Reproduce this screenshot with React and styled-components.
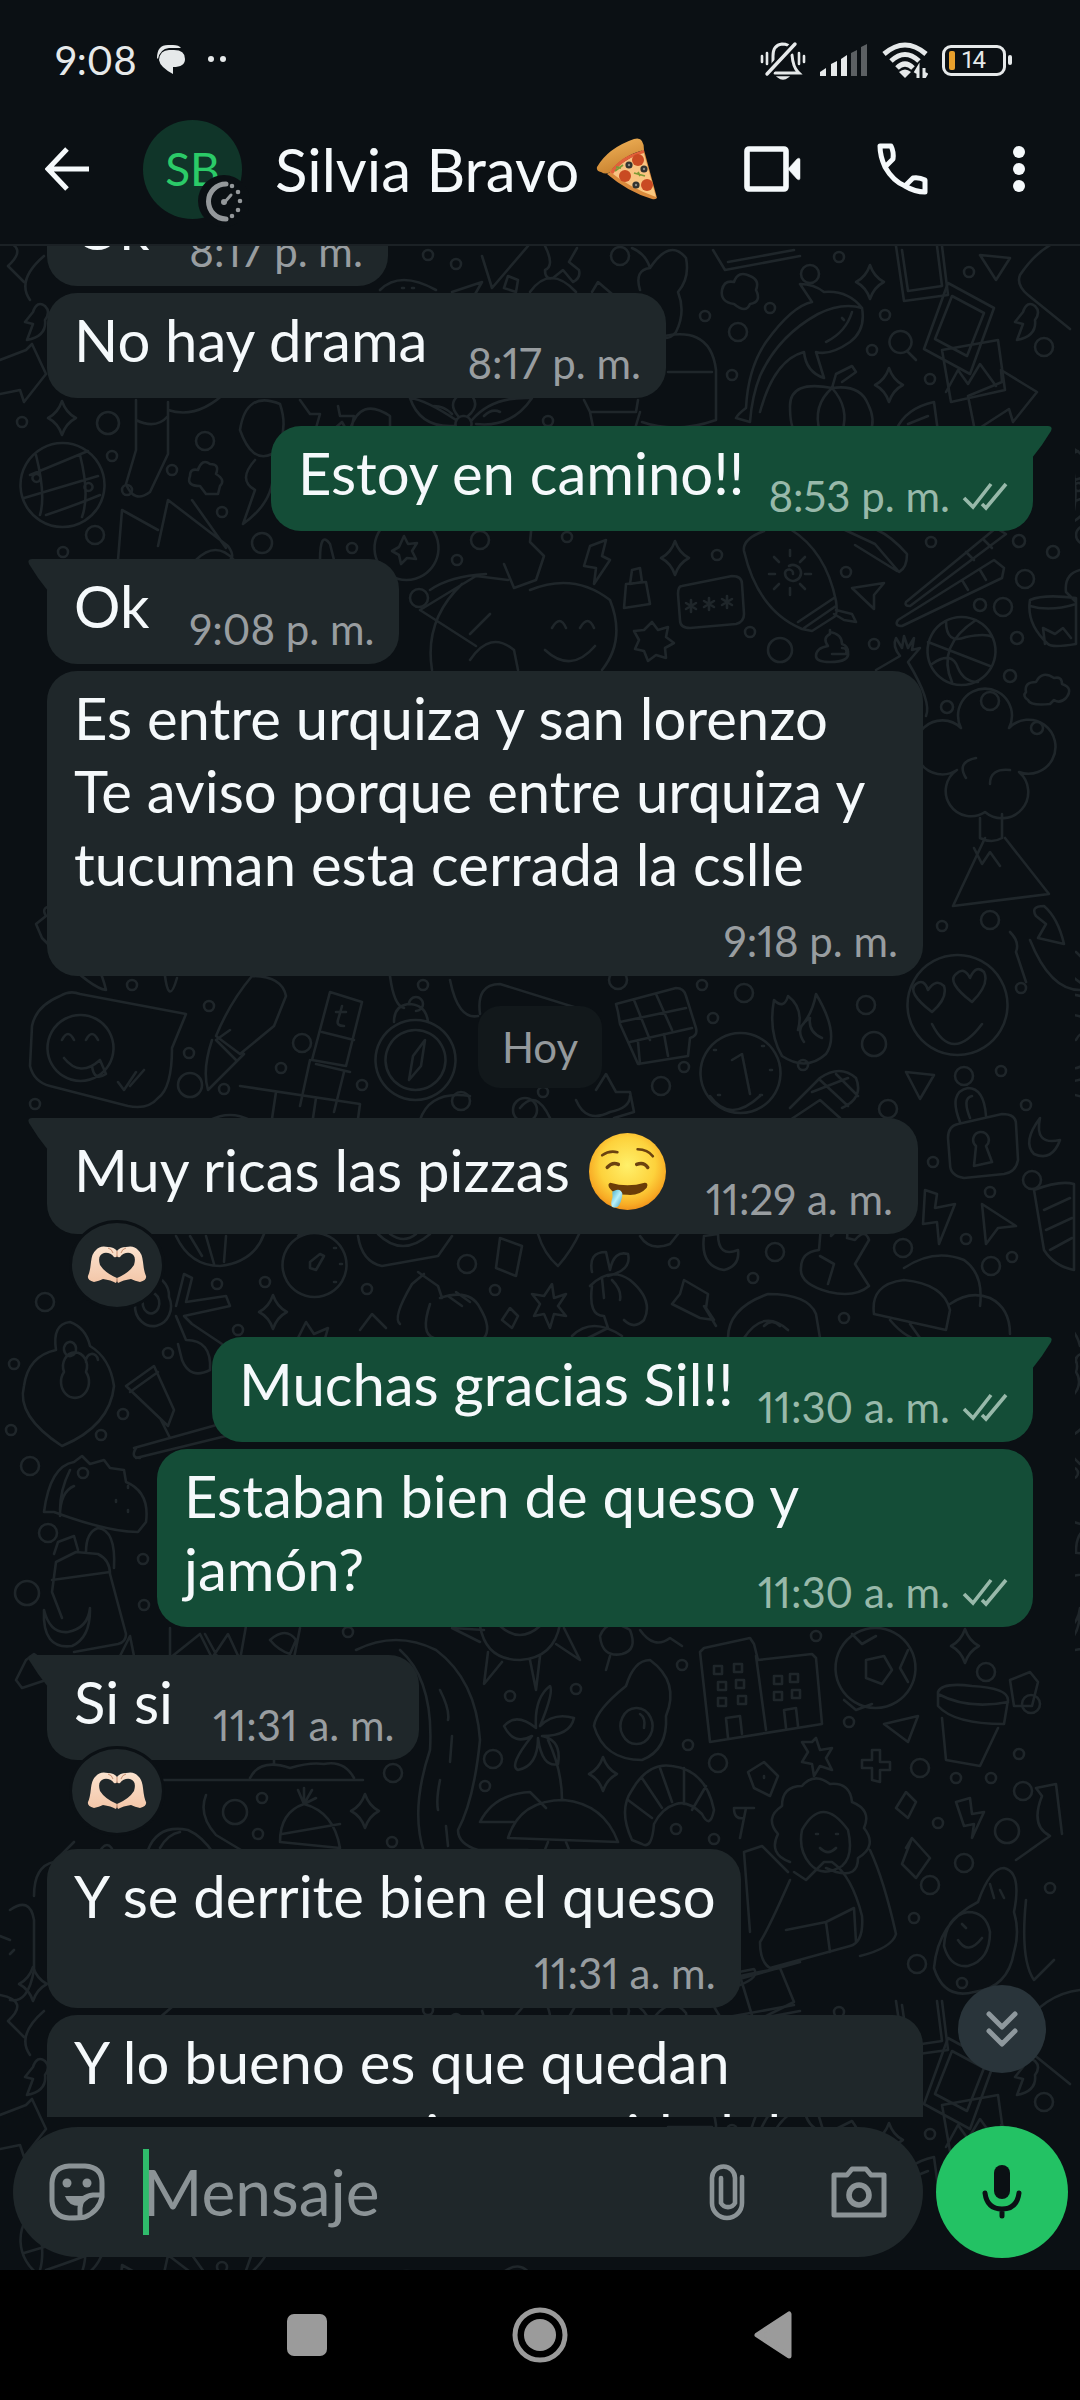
import React, { useLayoutEffect, useRef } from "react";
import styled, { createGlobalStyle, css } from "styled-components";

const messages = [
  { id: 1, text: ["Ok"], time: "8:17 p. m.", gap: 0 },
  { id: 2, text: ["No hay drama"], time: "8:17 p. m.", gap: 7 },
  { id: 3, text: ["Estoy en camino!!"], time: "8:53 p. m.", gap: 28, mine: true, tail: true },
  { id: 4, text: ["Ok"], time: "9:08 p. m.", gap: 28, tail: true },
  {
    id: 5,
    text: ["Es entre urquiza y san lorenzo", "Te aviso porque entre urquiza y tucuman esta cerrada la cslle"],
    time: "9:18 p. m.",
    gap: 7,
    kind: "stacked",
    wide: true,
  },
  { id: 6, day: "Hoy" },
  { id: 7, text: ["Muy ricas las pizzas "], emoji: true, time: "11:29 a. m.", gap: 30, tail: true, reaction: true },
  { id: 8, text: ["Muchas gracias Sil!!"], time: "11:30 a. m.", gap: 30, mine: true, tail: true },
  { id: 9, text: ["Estaban bien de queso y", "jamón?"], time: "11:30 a. m.", gap: 7, mine: true, kind: "overlay", wide: true },
  { id: 10, text: ["Si si"], time: "11:31 a. m.", gap: 28, tail: true, reaction: true },
  { id: 11, text: ["Y se derrite bien el queso"], time: "11:31 a. m.", gap: 16, kind: "stacked" },
  {
    id: 12,
    text: ["Y lo bueno es que quedan", "con esa muy rica suavidad de"],
    time: "11:31 a. m.",
    gap: 7,
    kind: "stacked",
    wide: true,
  },
];

/* wallpaper: [x, y, radius] */
const dots = [
  [456, 264, 5], [428, 255, 5], [839, 257, 5], [810, 274, 9], [620, 256, 9], [969, 272, 5], [770, 308, 5],
  [705, 316, 5], [738, 332, 9], [885, 315, 5], [872, 350, 5], [732, 375, 5], [930, 379, 5], [1044, 347, 9],
  [548, 421, 5], [22, 422, 5], [108, 423, 11], [205, 441, 9], [172, 470, 5], [112, 456, 5], [127, 490, 5],
  [262, 543, 10], [222, 512, 5], [95, 535, 9], [63, 552, 5], [352, 548, 5], [457, 560, 5], [480, 540, 9],
  [567, 537, 5], [717, 555, 5], [846, 572, 5], [931, 542, 5], [1019, 541, 6], [1053, 552, 6], [1025, 579, 9],
  [980, 605, 6], [1003, 607, 9], [750, 632, 5], [780, 650, 12], [874, 644, 5], [1017, 638, 6], [1010, 676, 6],
  [990, 701, 9], [947, 707, 6], [1037, 728, 6], [419, 598, 9], [942, 926, 5], [990, 920, 9], [1021, 988, 5],
  [132, 985, 5], [423, 985, 5], [618, 980, 9], [702, 985, 5], [744, 993, 9], [866, 1005, 9], [209, 1006, 5],
  [302, 1043, 9], [189, 1053, 5], [713, 1018, 5], [874, 1044, 12], [684, 1067, 5], [803, 1065, 5],
  [281, 1068, 5], [190, 1085, 12], [224, 1089, 5], [362, 1085, 5], [661, 1086, 9], [964, 1076, 9],
  [1001, 1071, 5], [543, 1092, 5], [461, 1101, 9], [525, 1110, 12], [35, 1104, 5], [888, 1109, 9],
  [1032, 1180, 9], [933, 1162, 5], [990, 1192, 5], [1026, 1105, 5], [903, 1248, 9], [775, 1252, 9],
  [966, 1239, 5], [991, 1266, 9], [1012, 1257, 5], [674, 1263, 5], [467, 1264, 9], [495, 1290, 5],
  [753, 1278, 5], [367, 1289, 5], [217, 1284, 5], [265, 1282, 5], [45, 1302, 9], [238, 1330, 5],
  [844, 1318, 5], [168, 1353, 5], [14, 1364, 5], [123, 1414, 5], [11, 1430, 5], [101, 1435, 5],
  [30, 1466, 9], [83, 1473, 5], [48, 1533, 9], [143, 1559, 5], [27, 1593, 12], [144, 1605, 5],
  [682, 1665, 5], [576, 1689, 5], [510, 1696, 5], [986, 1672, 9], [1031, 1704, 9], [849, 1722, 5],
  [688, 1745, 5], [718, 1763, 9], [493, 1759, 9], [920, 1768, 9], [956, 1778, 5], [991, 1778, 5],
  [1019, 1754, 5], [1023, 1791, 9], [393, 1773, 9], [485, 1786, 5], [262, 1798, 5], [235, 1812, 12],
  [258, 1834, 5], [676, 1829, 5], [714, 1839, 5], [392, 1842, 5], [938, 1823, 5], [1007, 1831, 12],
  [964, 1863, 9], [930, 1885, 9], [914, 1918, 5], [1050, 1888, 5], [917, 1964, 9], [348, 1632, 5],
  [962, 1983, 5], [816, 1636, 5],
];

/* wallpaper: outlines */
const outlines = [
  // toys and photos on the right
  "M713 250l12 20 75-14M728 262l66-12M896 246l8 55 44-6-6-49M902 250l6 41 34-5-5-40",
  "M948 283l46 25-24 66-46-25zM952 296l32 17-17 43-32-17zM942 350l56-10 7 50-54 12zM946 392l12-22 10 14 12-20 16 22",
  "M980 255l30 3-14 22zM1020 275q24-36 60-40M1020 275q-4 10 8 20l42 34",
  "M968 396l34-14-1-12 36 22-24 30-4-13-34 22z",
  "M862 308q-20-6-44 6-40 22-58 62-8 20-10 46l-14-4q2-4 10-10 2-40 20-66 26-36 46-40l-12-18q14 0 24 8 24-2 38 16 4 22-12 34-20 14-34 10l8 26q-18-6-20-26-30 8-44 60",
  "M852 312q-6 20-26 30M842 318l2 2",
  "M734 304q-14-2-12-14 2-10 12-8 4-12 16-6 10 4 6 14 6 12-6 14-4 10-16 0z",
  "M832 388q-42-8-42 18 0 22 6 26h74q6-12-2-28-8-20-36-16zM832 388q-20 18-12 44M832 388q18 20 10 44M832 388l4-14 16-8 4 6-14 10M896 430q10-22 38-28l4 30M908 424l20-8",
  "M900 331a11 11 0 1 0 1 0zM908 352l8 8",
  "M1035 306q-8-6-12 6l-8 10 8 2-6 16q20-4 18-20 6-8 0-14zM45 306q-8-6-12 6l-8 10 8 2-6 16q20-4 18-20 6-8 0-14z",
  // balls
  "M62 443a42 42 0 1 0 1 0zM36 455q10 40 4 60M30 475l58-24M24 498l74-22M46 515q30-10 54-20M80 455q10 40 2 62M36 474a4 4 0 1 0 1 0zM88 483a4 4 0 1 0 1 0z",
  "M961 617a34 34 0 1 0 1 0zM928 642l62 24M946 621q0 24 20 16 20-4 26 0M932 664q20-14 26 4 6 14 20 14M976 620q-40 26-24 62",
  "M875 1628a40 40 0 1 0 1 0zM866 1660l18-4 8 14-10 14-16-6zM852 1634l10 10 14-8M908 1650l-8 18 8 14M844 1700l12 10 16-6",
  // surfboard, chopsticks, bowl
  "M764 531q-22 8-20 20 14 60 58 78l10 2 22-14q4-2 2-16-10-50-46-72M798 622l36-24M804 628l32-22M836 610l16 4 4 8-12-2-10-6",
  "M789 566a8 8 0 1 1-4 7 4 4 0 1 1 8 1M790 556v-6M800 562l5-5M805 574h6M800 584l5 5M790 588v7M779 584l-5 5M775 574h-6M779 562l-5-5",
  "M845 530l30 14 24 28q8-4 8-18-16-18-30-24M855 545l42 26",
  "M906 602l90-74 10 6-96 72q-6 0-4-4zM898 620l96-60 10 8-2 10-100 48q-8 0-4-6zM962 580l6 10M980 570l6 10M966 552l8 8M984 540l8 8",
  "M1030 600q14-6 46-2v46q-24 4-28 0-22-20-18-44zM1030 606q20 6 46-2M1045 644l-2-16 12 6 8-6 8 10M1080 570q-16 4-14 22l10 10",
  "M852 588l32-5-10 12v14zM830 634q-8 4-2 12-12 2-12 10 0 6 14 6 20 0 18-10 0-6-6-8 0-10-12-12v-2zM832 654h14q2-6-4-6",
  "M876 670l24-14q-8-10-4-18l6 10 2-12 4 12 6-10-2 12 8-2-12 14q24 40 18 54",
  "M1026 692q-2-10 10-10 6-12 18-4 8-2 8 6 12 4 4 14-6 6-12 2l-4 4q-20 2-22-4-6-4-2-8z",
  // password box, badge, star
  "M682 586l50-10q10 0 10 8l2 30q0 8-8 10l-46 4q-10 0-10-8l-2-26q0-8 4-8zM691 600v12M686 603l10 6M696 603l-10 6M709 598v12M704 601l10 6M714 601l-10 6M727 596v12M722 599l10 6M732 599l-10 6",
  "M652 622l6 8 10-3-2 10 8 6-9 5 1 10-10-3-8 6-4-10-9-2 4-9-5-9 10-1z",
  "M406 516a32 32 0 1 0 1 0zM404 536l4 8 9-1-5 8 4 8-9-1-6 6-2-9-7-4 7-4z",
  "M590 546l16-6-4 16 8 4-16 24 2-16-12-2zM626 584l20-2 4 22-26 4zM630 584l2-14 8-2 2 14z",
  // reading person
  "M420 610l56-34 32 4M420 610l56 36M430 590q20-14 56-16M432 670q-8-50 30-86M500 520q20-18 32 2l-2 20 14 14-8 24-22 8-10-24M470 660q20-30 44-10l4 20M530 590q44-18 80 10 16 40-8 70M545 650q26 24 50-4M552 628q8-14 14 0M580 628q8-14 14 0M470 634l20-20",
  // flower and leaves
  "M463 416a8 8 0 1 0 1 0zM456 420q-30-20-46-22 10 30 44 28M472 420q20-24 60-22-20 30-56 26M458 416q-10-12 0-20M468 416q12-10 4-20M500 412q-8-4-16 4M452 414q-8-8-18-8",
  "M136 400v50l-10 34q8 20 24 8l18-38v-52M136 420q20 10 32-4M168 410q30 10 60-20M240 430q6-40 40-26 10 30-8 50-20 10-32-24M255 460q-18 20 0 30l-12 34q34-24 30-60M300 400l10 14h10l-4 14 10 8 16-14 8 14 4-20h-14l-2-10M350 430q10-34 40-14v14M584 400l6 12h46l2-12M590 412l4 20h40l6-20M650 340q60-20 66 30v50q-40 14-74 2M668 372h44",
  "M118 560l4-50 36 20M158 546l10-46 60 46q10 14-4 16M192 500l34 48M196 560q20-20 38 0M320 560q0-30 10-16l4 16",
  "M200 486q-14 0-10-10 0-8 8-6 4-12 12-6 10 0 6 10 10 6 4 12l-2 8h-12z",
  // small things by the header
  "M482 256l10 32 36-42M545 246q10 20 0 24 0 10 8 8l10-8 10 12q8-4 6-12l-10-8 8-14",
  "M380 290q20-20 56 0M402 288h2M412 288h2M452 292l30-10-8 14M508 276l10 4-2 12-12-4zM530 292q20-28 46 0M592 292l6-10 14 12M640 290q-6-20 10-22-4-14-18-20M650 268q20-30 36-10 4 20-8 34 8 20-2 40-10 12-20 0",
  "M0 240q30 6 8 26l16 16M30 300q-14-20 14-44",
  "M0 360l26-10 6-6 14 30-22 28-4-12-20 4",
  // cloud tree, chili and mountain
  "M957 770a27 27 0 1 1 4-42 27 27 0 1 1 48 0 27 27 0 1 1 10 44 24 24 0 0 1-34 40 24 24 0 1 1-28-42M966 778q-10-16 10-20M990 784q0-16 20-14M980 818v20q12 6 22 0v-24M985 838l-32 68 96-12-44-56M974 848l8 16 8-12 10 14",
  "M1044 906q-14 0-8 10l10 8-8 14 26 6q-6-26-20-38zM1030 940q20 50 50 50M1010 932q10 10 6 20l10 30",
  "M54 906q-14 0-8 10l-10 8 6 14 20 20q30 30 44 32-6-26-20-38",
  // speech bubble with face
  "M60 996q10-6 20-2l106 20-14 34q0 40-14 50-10 12-30 8l-78-20q-16-4-20-20l2-40q4-20 28-30zM80 1015a33 33 0 1 0 1 0zM62 1040q6-12 12 0M86 1040q6-12 12 0M64 1058q16 20 36 2l6 14q-12 8-14-8M118 1082l6 8 12-18M130 1086l14-16",
  "M957 955a50 50 0 1 0 1 0zM932 1012q-26-20-16-28 8-6 12 6 8-12 16-4 4 12-12 26zM972 1002q-26-20-16-28 8-8 14 4 6-14 14-6 6 12-12 30zM932 1024q20 40 50 0",
  // pen, ruler, compass
  "M252 976q30 0 34 20l-12 30-34 28-24-18q14-34 36-60zM230 1030l-14 10 20 20M212 1040q-10 30-4 50l36-36M165 976q4 30 12 2",
  "M330 992l32 10-16 64-34-6zM322 1032l32 8M316 1064l34 8M342 1006l-4 14q-2 6 6 6M336 1012h10M310 1060l-10 46M344 1072l-10 40",
  "M415 1020a40 40 0 1 0 1 0zM415 1030a30 30 0 1 0 1 0zM409 1080l4-24 12-16-4 26zM394 1022q0-16 14-18 18 0 20 18M409 1004a7 7 0 1 1 7 7M390 976q4 30 14 32",
  "M240 1086l120 18-4 30M276 1092l-6 40M316 1098l-6 40M480 1014q-4-30 20-30l90 28M450 980q8 40 28 36",
  // chocolate, flame, medal
  "M616 1004l60-16q8 0 10 8l10 32q2 8-6 10l-2 18-50 8-18-40-2-12zM634 1000l16 40M656 994l16 36M620 1022l66-14M630 1042l62-14M640 1064l-2-22M668 1056l-4-22",
  "M774 1000q10 10 14-4 16 12 10 34 14-14 18-36 24 40 10 60-20 18-44 2-14-24-8-56zM804 1042q-10-14 6-24-2 14 12 20",
  "M740 1033a40 40 0 1 0 1 0zM732 1060l10-6 8 40M762 1046h2M770 1070h2M760 1095h2M714 1050h2M718 1095h2",
  "M790 1108q20-20 30-30 20-14 36 0 8 20-14 30M820 1080l28 26M836 1074l22 22M812 1092l36-14M906 1072l28 3-14 24zM596 1090l10-16 10 18 14 0 4 20-20 6",
  // row under the day chip
  "M420 1120q10-30 50-24M520 1108q16-20 30 10M576 1100q10 24 34 12 20-4 20-16M710 1096q20 28 50 0M790 1120l30-20 20 18M250 1120q-20-10-40 0",
  // padlock and moon
  "M958 1124l44-10q14 0 14 10l2 36q-2 12-14 14l-40 4q-14-2-14-14l-2-26q0-12 10-14zM960 1122q-12-30 8-34 16 0 18 28M970 1118q-8-20 2-22M980 1132a8 8 0 0 1 6 14l6 16-18 4 2-20a8 8 0 0 1 4-14z",
  "M1040 1118q-18 24-6 36 18 8 26-14-26 6-20-22z",
  "M925 1190l12 4-2 14 20-4-16 40-2-22-14 2zM982 1204l34 22-18 2-12 16zM1034 1190q26-10 40-6v86q-20-4-30-20zM1044 1210l26-12M1046 1230l26-12M1050 1250l22-12",
  // second band, left to right
  "M176 1236q14 30 44 30 34-4 44-32M190 1236l12 20M206 1236l8 28M226 1236l-2 26M314 1233a32 32 0 1 0 1 0zM310 1262l10-8 4 2-8 14-6-2zM334 1248h2M340 1264h2M334 1282h2M298 1236l4-4",
  "M358 1236q4 26 24 30l56-10 14-20M378 1234q24 24 52 0M390 1234q14 10 26 0M538 1234q6 20 20 32 14-16 22-34M500 1238l22 8-6 30-20-8zM640 1236q10 16 30 8l8-10M704 1236q-4 30 20 34 16-4 14-20-20 8-20-16z",
  "M855 1240q10-12 14 0l-14 24 14 22q-14 12-40 6-30-8-28-24 0-16 18-18l2-24q12-2 10 10l8-8q10 0 8 10zM820 1256l14 8-6 20",
  "M418 1272l20 14 4 12M424 1274l-12 10q-20 34-12 40M430 1304q-10 30 4 34M440 1298q30-10 40 10 12 20 4 30M448 1296l14 10M456 1292l14 10",
  "M592 1272q-4-20 14-20l4 18q4-20 18-16 4 16-20 22M590 1286q20-20 40-6 24 20 14 40-10 10-20 0M592 1286q-4 30 12 30l4 12-20 10M572 1336q20-20 50 0M602 1278l2 20M612 1280q10 10 8 20",
  "M552 1284l2 14 12-4-8 12 8 10-12-2-4 14-6-14-10 2 6-12-8-10 12 2zM510 1308l8 8-6 12-10-8zM684 1280l24 14-2 14 8 12-14-2-28-14 8-10zM704 1306l12 20",
  "M728 1338q0-30 40-44 40 0 48 20l4 24M744 1338q20-30 44-8M764 1326q8-8 16 0M874 1314q-4-30 30-34 40 4 46 30l-4 20zM874 1314l72 16M904 1268q30-20 60-8 20 14 16 46M950 1304q20-14 40-6 20 10 20 36M890 1320q20 24 40 20M910 1324l10 14",
  "M135 1305a18 20 0 1 1 34-8 18 20 0 1 1-34 8zM143 1306a8 10 0 1 1 16-6 8 10 0 1 1-16 6zM176 1306l8-32 8 4-6 24 40-6 4 10-46 10 8 8 30 20M176 1316l10 24q26 0 24 30-20 10-28-10l-4-16",
  "M298 1338l8-16 8 12 14-6-4 14M360 1330l12-16 14 14",
  // pear, glass, rolling pin, taco
  "M56 1350q-4-26 14-28 16 6 20 24 20 12 24 40-4 40-52 60-46-30-38-60 4-30 32-36zM64 1350a6 7 0 1 1 12-2 6 7 0 1 1-12 2zM86 1362a6 7 0 1 1 12-2M64 1372a12 14 0 1 1 22 0 14 16 0 1 1-22 0z",
  "M126 1386l28-20 20 44-6 16zM130 1392l28-20M134 1448l86-24M136 1458l90-22q12-10 4-14M136 1448q-6 10 4 10M170 1438l-10-20",
  "M44 1512q6-46 30-50l8-6 8 8 14-4 6 8 14 2 2 12q24 10 20 40l-8 10q-30 0-84-20zM60 1516q0-24 14-30M128 1486v2M116 1500v2M128 1510v2M70 1470q-10 20-10 40",
  // bottle and bananas
  "M56 1562l20-10 22 2q12 6 12 20l16 60q0 8-8 10l-44 8M56 1562l-4 30 10 26M54 1554l4-12 16-6 4 14M52 1580l58-8M86 1552q0-20 12-24 18 2 16 40M44 1610q6 24 24 22 20-4 22-24M44 1610q-2 40 28 36 18-8 18-36",
  "M26 1660l8-6 8 6 4 20-12 4-12 4-6-8zM120 1656l10-20 6 30M170 1628v30l30-24 12 24 16-24 12 26 6-34M205 1634l12 22M270 1640q16-14 26 0l-6 14q-12-4-20-14zM300 1628l-6 30",
  // sun, road, egg
  "M480 1626q6 34 40 34 34-2 40-36M500 1626q20 18 40 0M484 1630l-32-2 28 14M488 1652l-4 32 18-22M530 1660l6 30 4-34M556 1644l24 16-16-32",
  "M356 1650q40-20 80 0 40 30 44 90-6 60-22 90 0 14 20 20h50M400 1650q34 30 30 100-20 60-6 102M440 1690q10 20 8 30M452 1736l-2 26M440 1780q-4 20-2 30M446 1826l2 20",
  "M650 1660q-16 0-24 26-30 24-32 40 10 34 48 34 26-10 24-44 14-34-16-56zM636 1708a16 18 0 1 0 1 0zM640 1714q6 4 4 14M600 1636q8-20 30-6 8 20-8 24-20 4-22-18zM610 1656l-4 14M640 1630q14 20 30 8l12 8",
  // buildings
  "M710 1742l-10-90 4-4 46-10 4 6 4 16 54-6 4 4 6 66zM756 1656l10 74M714 1666h8v8h-8zM734 1664h8v8h-8zM718 1682h8v8h-8zM736 1680h8v8h-8zM718 1698h8v8h-8zM738 1696h8v8h-8zM774 1676h8v8h-8zM790 1674h8v8h-8zM774 1692h8v8h-8zM792 1690h8v8h-8zM728 1738l-2-20 14-2 2 18M786 1728l-2-18 12-2 2 18",
  // plant pot, plus, asterisk
  "M938 1692q4-10 34-6 36 2 36 14l-4 24q-50 0-66-18zM938 1694q30 16 70 8M942 1718l4 42 34 6 18-38M884 1724l34-8-10 26zM872 1750h8v12h10v8h-10v12l-8-2v-12h-10v-8h10zM816 1738l4 12 12-2-6 10 6 12-12-4-6 10-2-12-10-2 6-10-6-10h10zM1010 1680l20-8 8 10-6 24h-18z",
  // palm leaf, beach umbrella
  "M536 1728q-20-16-32-2 10 20 28 10-24 30-14 34 20-4 20-32 4 30 20 26 4-24-16-28 28 0 32-18-20-6-34 8 14-34 10-40-16 12-14 42zM548 1740q14 30 14 60M480 1822q14-28 50-30l16 16M480 1822h34M508 1838q12-38 56-38 40 4 54 42zM548 1842l-4 10M566 1842l4 10",
  "M163 1780h200M250 1778q10-20 40-10 20-6 34-4 20-4 30 14M274 1764v-8M206 1795q-8 20 10 40l30 18M280 1842q0-30 24-38 30 8 36 44zM282 1834l58-10M304 1804l-6-14M304 1804v-16M304 1804l8-14M304 1804l12-6M148 1850q10-26 40-20 14 6 26 24M160 1848q8-14 20-16M96 1858q12-26 20 0",
  // croissant
  "M632 1840q-14-30 0-50 16-28 40-24 34 4 42 44-4 20-12 4-14-14-26-10-14 4-22 20-2 26-12 20zM642 1778l20 30M660 1768l12 34M684 1768v36M706 1786l-14 24M628 1800l24 18M734 1808h20M746 1808l-6 30M734 1808q0 12 10 10",
  // person with the laptop
  "M790 1862q-22-8-12-28-14-16 4-28 0-20 20-20 12-14 28-2 20-2 22 18 20 8 12 26 14 18-6 30 0 20-22 14l-10-4M802 1830q20-36 46 0 6 26-6 36-20 12-32-2-12-14-8-34zM816 1834h2M836 1834h2M820 1848q8 8 16 0M790 1880q-22 50-30 62 0 20 10 26l80-22q14-4 12-30-10-40-30-54l-8 0-18 18-12-8M786 1930l40-8 4 30M826 1922l28-14 2 34M744 1852l18-6 26 26M744 1852l6 80M870 1850q14 30 26 84-4 14-36 22M740 1976l40-8 14 34-40 20zM700 1990l100-28",
  // avocado
  "M1004 1868q-14 0-26 34-40 20-44 66 10 32 40 24 34-4 40-40 6-20 0-40 8-40-10-44zM968 1912q-22 4-24 34 6 22 24 20 22-6 22-34-4-20-22-20zM958 1940q10 16 24-2M962 1924l4 4M990 1884l4 14M1000 1890l4 8M1030 1850l20-14q-20-10-8-40l-6-8 20-4 6 50M1016 1860l20-14",
  "M970 1798l-14 4 8 24 10-2-2 14 12-26-12 2zM764 1762l14 14-8 20-16-8-6-16zM764 1776v2M906 1792l10 10-8 16-12-10zM912 1838l18 20-14 20-14-14zM912 1838l-6 10",
  // last row before the tile repeats
  "M10 1910q20-14 24 10v50q-6 34-24 30M0 1936l10 4M14 1950l-4 4M34 1896q0-30 20-34l20-20M1026 1900q-6 60 8 80l20-20",
  "M660 2005l80-20q20-8 14-16l-100 20M560 2000l30-20 40 14M420 1996q20 20 40 0M300 2000l20-16 20 18M180 2000l-30 26",
];

const sparkles = [
  [870, 282], [889, 385], [62, 418], [675, 558], [273, 1312], [603, 1774], [965, 1646], [365, 1811], [33, 1984],
];

const Wallpaper = () => (
  <WallpaperSvg aria-hidden="true">
    <g fill="none" stroke="#1f262a" strokeWidth="2.6" strokeLinejoin="round" strokeLinecap="round">
      <g transform="translate(0 -246)">
        <g id="tile">
          {dots.map(([x, y, r]) => (
            <circle key={`${x}-${y}`} cx={x} cy={y} r={r} />
          ))}
          {sparkles.map(([x, y]) => (
            <path key={`${x}-${y}`} d={`M${x} ${y - 17}q4 12 14 17q-10 5-14 17q-4-12-14-17q10-5 14-17z`} />
          ))}
          {outlines.map((d) => (
            <path key={d} d={d} />
          ))}
        </g>
        <use href="#tile" x="0" y="1755" />
        <use href="#tile" x="990" y="0" clipPath="url(#edge)" />
      </g>
    </g>
    <defs>
      <clipPath id="edge">
        <rect x="85" y="0" width="900" height="2400" />
      </clipPath>
    </defs>
  </WallpaperSvg>
);

const Pizza = () => (
  <svg width="62" height="62" viewBox="0 0 62 62" role="img" aria-label="pizza">
    <defs>
      <linearGradient id="crust" x1="0" y1="0" x2="0.4" y2="1">
        <stop offset="0" stopColor="#f3b65c" />
        <stop offset="1" stopColor="#c9822f" />
      </linearGradient>
      <linearGradient id="cheese" x1="0" y1="0" x2="1" y2="1">
        <stop offset="0" stopColor="#f08a5a" />
        <stop offset="0.3" stopColor="#f9c283" />
        <stop offset="1" stopColor="#fbc97e" />
      </linearGradient>
    </defs>
    <path d="M11 36L48 12 61 60Q59 62 56 61Q32 54 11 36z" fill="#d98a3c" />
    <path d="M13 33L47 12 60 59Q34 50 13 33z" fill="url(#cheese)" />
    <path d="M1 29Q12 10 38 1Q48-2 48 12Q27 17 14 34Q10 37 5 34Q0 33 1 29z" fill="url(#crust)" />
    <path d="M14 34Q24 18 48 12L48 15Q26 21 17 36z" fill="#e2603a" />
    <circle cx="42" cy="22" r="6" fill="#c94a22" />
    <circle cx="29" cy="38" r="6" fill="#c94a22" />
    <circle cx="51" cy="47" r="6" fill="#c94a22" />
    <g fill="#8c8a84" stroke="#33332f" strokeWidth="2.4">
      <circle cx="33" cy="27" r="2.4" />
      <circle cx="48" cy="31" r="2.4" />
      <circle cx="40" cy="47" r="2.4" />
    </g>
    <path d="M19 33l8-6M20 29l5 1M38 35l11 3M42 34l2 4" stroke="#7d9a35" strokeWidth="1.8" fill="none" />
  </svg>
);

const DroolingFace = () => (
  <Emoji viewBox="0 0 76 76" role="img" aria-label="drooling face">
    <defs>
      <radialGradient id="face" cx="0.5" cy="0.42" r="0.6">
        <stop offset="0" stopColor="#fff06a" />
        <stop offset="0.6" stopColor="#fdd23c" />
        <stop offset="0.85" stopColor="#f8ac25" />
        <stop offset="1" stopColor="#ee8c18" />
      </radialGradient>
      <linearGradient id="drool" x1="0" y1="0" x2="1" y2="1">
        <stop offset="0" stopColor="#3fa9c9" />
        <stop offset="0.5" stopColor="#b9f1fa" />
        <stop offset="1" stopColor="#3b9ab8" />
      </linearGradient>
    </defs>
    <circle cx="38" cy="38" r="38" fill="url(#face)" />
    <g fill="none" stroke="#6b4210" strokeWidth="3.4" strokeLinecap="round">
      <path d="M13 22Q20 17 28 19M48 16Q58 16 63 23" strokeWidth="2.6" />
      <path d="M18 34Q23 28 29 31M47 31Q54 28 58 34" />
    </g>
    <path d="M21 49Q38 54 55 49Q59 49 57 54Q50 62 38 61Q24 61 20 54Q18 50 21 49z" fill="#6b3d08" />
    <path d="M25 57Q31 54 33 60Q32 70 28 73Q21 75 22 68Q24 63 23 58z" fill="url(#drool)" />
  </Emoji>
);

const HeartHands = () => (
  <svg width="60" height="38" viewBox="0 0 60 38" role="img" aria-label="heart hands">
    <defs>
      <linearGradient id="skin" x1="0" y1="0" x2="0" y2="1">
        <stop offset="0" stopColor="#fbe3cf" />
        <stop offset="1" stopColor="#f3c6a8" />
      </linearGradient>
    </defs>
    <path
      d="M30 5Q27 1 21 1Q13-1 9 4Q5 7 4 16Q3 26 1 30Q0 34 7 36Q12 35 16 33Q24 34 29 37Q30 36 30 32Q18 27 13 19Q10 9 17 7Q23 6 27 11Q30 12 30 9Z"
      fill="url(#skin)"
    />
    <path
      d="M30 5Q33 1 39 1Q47-1 51 4Q55 7 56 16Q57 26 59 30Q60 34 53 36Q48 35 44 33Q36 34 31 37Q30 36 30 32Q42 27 47 19Q50 9 43 7Q37 6 33 11Q30 12 30 9Z"
      fill="url(#skin)"
    />
    <path d="M30 5v6M30 32v4M21 2q4 1 5 5M39 2q-4 1-5 5" stroke="#c98e70" strokeWidth="1" fill="none" />
  </svg>
);

const Checks = () => (
  <svg width="46" height="29" viewBox="0 0 46 29" fill="none" stroke="currentColor" strokeWidth="3.6" aria-label="entregado">
    <path d="M2 16l9 9L29 2" />
    <path d="M20 22l4 4L44 2" />
  </svg>
);

const StatusIcons = () => (
  <StatusGroup>
    <svg width="46" height="40" viewBox="0 0 46 40" fill="none" stroke="#e6e9ea" strokeWidth="3" strokeLinecap="round">
      <path d="M13 27V16q0-11 9-12 7 0 10 5M13 24l-3 5M32 15q1 12 6 17l1 1H15" />
      <path d="M6 35L35 4" stroke="#0b1014" strokeWidth="8" />
      <path d="M7 34L35 4" strokeWidth="3.4" />
      <path d="M2 16v6M7 13v11M39 13v11M44 16v6" strokeWidth="2.6" />
      <path d="M18 37h10q-5 4-10 0z" fill="#e6e9ea" strokeWidth="1.5" />
    </svg>
    <svg width="48" height="32" viewBox="0 0 48 32" fill="#e6e9ea">
      <path d="M0 32v-4l6-4v8zM11 32V20l6-3v15zM21 32V15l6-4v21z" />
      <path d="M31 32V9l6-3v26zM41 32V3l6-3v32z" fill="#5c6063" />
    </svg>
    <svg width="46" height="36" viewBox="0 0 46 36" fill="none" stroke="#e6e9ea" strokeWidth="5">
      <path d="M2 12Q23-6 44 12M9 19Q23 6 37 19M15 26Q23 18 31 26" />
      <path d="M23 36l-6-6q6-5 12 0z" fill="#e6e9ea" stroke="none" />
      <path d="M36 36V26l-3 5M42 26v10l3-5" strokeWidth="3" />
    </svg>
    <Battery>
      <BatteryLevel />
      14
    </Battery>
  </StatusGroup>
);

const Message = ({ item }) => {
  const { text, time, gap, mine, tail, kind, wide, emoji, reaction } = item;
  return (
    <Row $mine={mine} $gap={gap}>
      <Bubble $mine={mine} $tail={tail} $kind={kind} $wide={wide}>
        {tail && (
          <Tail $mine={mine} viewBox="0 0 40 32" aria-hidden="true">
            <path d="M40 0H4Q-1 0 1 5Q10 20 20 32H40z" fill="currentColor" />
          </Tail>
        )}
        <Text $oneLine={emoji}>
          {text.map((line, i) => (
            <React.Fragment key={line}>
              {i > 0 && <br />}
              {line}
            </React.Fragment>
          ))}
          {emoji && <DroolingFace />}
        </Text>
        <Meta $mine={mine} $kind={kind}>
          {time}
          {mine && <Checks />}
        </Meta>
      </Bubble>
      {reaction && (
        <Reaction type="button" aria-label="Reacciones">
          <HeartHands />
        </Reaction>
      )}
    </Row>
  );
};

const App = () => {
  const list = useRef(null);

  useLayoutEffect(() => {
    list.current.scrollTop = 65;
  }, []);

  return (
    <Phone>
      <GlobalStyle />
      <StatusBar>
        <StatusGroup>
          <Clock>9:08</Clock>
          <svg width="74" height="30" viewBox="0 0 74 30" fill="#e6e9ea">
            <path d="M0 13Q0 0 11 0H16Q22 0 24 3H12Q3 4 1 14z" />
            <path d="M2 15Q3 5 12 5H17Q28 5 28 14Q28 22 16 22V29Q3 22 2 15z" />
            <circle cx="54" cy="14" r="3" />
            <circle cx="66" cy="14" r="3" />
          </svg>
        </StatusGroup>
        <StatusIcons />
      </StatusBar>

      <Header>
        <IconButton type="button" aria-label="Atrás">
          <svg width="44" height="44" viewBox="0 0 44 44" fill="none" stroke="currentColor" strokeWidth="5">
            <path d="M44 22H4M22 2L3 22l19 20" />
          </svg>
        </IconButton>
        <Avatar>
          SB
          <Timer viewBox="0 0 52 52" aria-hidden="true">
            <circle cx="26" cy="26" r="26" fill="#0b1014" />
            <g stroke="#94989b" fill="none" strokeLinecap="round">
              <path d="M28 9A17 17 0 0 0 28 44" strokeWidth="5" />
              <path d="M26 28l7-8" strokeWidth="3" />
              <circle cx="26" cy="27" r="1.5" strokeWidth="3" />
              <path d="M34 11h0M40 17h0M42 26h0M40 35h0M34 41h0" strokeWidth="4.6" />
            </g>
          </Timer>
        </Avatar>
        <Name>
          Silvia Bravo
          <Pizza />
        </Name>
        <IconButton type="button" aria-label="Videollamada">
          <svg width="57" height="46" viewBox="0 0 57 46" fill="none" stroke="currentColor" strokeWidth="5.6">
            <rect x="3" y="3" width="39" height="40" rx="2" />
            <path d="M44 23l9-10q3-2 3 1v18q0 3-3 1z" fill="currentColor" strokeWidth="0.5" />
          </svg>
        </IconButton>
        <IconButton type="button" aria-label="Llamar">
          <svg width="51" height="52" viewBox="0 0 51 52" fill="none" stroke="currentColor" strokeWidth="5" strokeLinejoin="round">
            <path d="M3 3h11q3 6 2 13l-8 8Q3 13 3 3zM8 24Q16 38 28 43M48 49V37q-6-3-12-2l-8 8Q38 49 48 49z" />
          </svg>
        </IconButton>
        <IconButton type="button" aria-label="Más opciones">
          <svg width="12" height="46" viewBox="0 0 12 46" fill="currentColor">
            <circle cx="6" cy="6" r="6" />
            <circle cx="6" cy="23" r="6" />
            <circle cx="6" cy="40" r="6" />
          </svg>
        </IconButton>
      </Header>

      <Chat>
        <Wallpaper />
        <List ref={list}>
          {messages.map((item) =>
            item.day ? (
              <Day key={item.id}>{item.day}</Day>
            ) : (
              <Message key={item.id} item={item} />
            )
          )}
        </List>
        <ScrollDown type="button" aria-label="Ir al final">
          <svg width="34" height="38" viewBox="0 0 34 38" fill="none" stroke="currentColor" strokeWidth="5" strokeLinecap="round" strokeLinejoin="round">
            <path d="M4 4l13 13L30 4M4 21l13 13 13-13" />
          </svg>
        </ScrollDown>
        <Composer>
          <Pill>
            <FieldButton type="button" aria-label="Stickers">
              <svg width="56" height="58" viewBox="0 0 56 58" fill="none" stroke="currentColor" strokeWidth="5">
                <path d="M20 3h16Q53 4 53 20v14Q50 48 36 54 32 55 20 55 4 54 3 38V20Q4 4 20 3z" />
                <path d="M31 54V45Q32 33 44 32h9" />
                <path d="M16 33h17l12-2-14 12q-12 0-15-10z" fill="currentColor" stroke="none" />
                <circle cx="18" cy="20" r="4.5" fill="currentColor" stroke="none" />
                <circle cx="38" cy="20" r="4.5" fill="currentColor" stroke="none" />
              </svg>
            </FieldButton>
            <Caret />
            <Field type="text" placeholder="Mensaje" aria-label="Mensaje" />
            <FieldButton type="button" aria-label="Adjuntar">
              <svg width="36" height="58" viewBox="0 0 36 58" fill="none" stroke="currentColor" strokeWidth="4.6" strokeLinecap="round">
                <path d="M33 14v26a15 15 0 0 1-30 0V15a11 11 0 0 1 23 0v25a8 8 0 0 1-14 0V15" />
              </svg>
            </FieldButton>
            <FieldButton type="button" aria-label="Cámara">
              <svg width="56" height="52" viewBox="0 0 56 52" fill="none" stroke="currentColor" strokeWidth="5" strokeLinejoin="round">
                <path d="M3 9h13l5-6h14l5 6h13v40H3z" />
                <circle cx="28" cy="29" r="10" strokeWidth="5.6" />
              </svg>
            </FieldButton>
          </Pill>
          <MicButton type="button" aria-label="Grabar mensaje de voz">
            <svg width="40" height="56" viewBox="0 0 40 56" fill="none" stroke="currentColor" strokeWidth="5" strokeLinecap="round">
              <rect x="12" y="1" width="16" height="34" rx="8" fill="currentColor" stroke="none" />
              <path d="M3 29q2 16 17 16t17-16M20 46v6" />
            </svg>
          </MicButton>
        </Composer>
      </Chat>

      <NavBar>
        <NavButton type="button" aria-label="Recientes">
          <svg width="40" height="42" viewBox="0 0 40 42">
            <rect width="40" height="42" rx="7" fill="#9b9b9b" />
          </svg>
        </NavButton>
        <NavButton type="button" aria-label="Inicio">
          <svg width="56" height="56" viewBox="0 0 56 56">
            <circle cx="28" cy="28" r="25" fill="none" stroke="#9b9b9b" strokeWidth="5" />
            <circle cx="28" cy="28" r="16" fill="#9b9b9b" />
          </svg>
        </NavButton>
        <NavButton type="button" aria-label="Volver">
          <svg width="38" height="48" viewBox="0 0 38 48">
            <path d="M35 3v42L3 24z" fill="#9b9b9b" stroke="#9b9b9b" strokeWidth="5" strokeLinejoin="round" />
          </svg>
        </NavButton>
      </NavBar>
    </Phone>
  );
};
export default App;

const GlobalStyle = createGlobalStyle`
  * {
    box-sizing: border-box;
  }
  body {
    margin: 0;
    background-color: #000000;
    font-family: Lato, Roboto, sans-serif;
    font-variant-numeric: proportional-nums;
  }
  button {
    display: flex;
    justify-content: center;
    align-items: center;
    padding: 0;
    border: none;
    background: none;
    color: inherit;
    cursor: pointer;
  }
  svg {
    flex-shrink: 0;
  }
`;
const Phone = styled.div`
  display: flex;
  flex-direction: column;
  height: 100vh;
  background-color: #0b1014;
  color: #f5f9fb;
`;
const StatusBar = styled.div`
  display: flex;
  justify-content: space-between;
  align-items: center;
  height: 120px;
  padding: 0 74px 0 55px;
`;
const StatusGroup = styled.div`
  display: flex;
  align-items: center;
  gap: 14px;
`;
const Clock = styled.div`
  margin-right: 6px;
  font-size: 40px;
  line-height: 48px;
  color: #e6e9ea;
`;
const Battery = styled.div`
  position: relative;
  display: flex;
  justify-content: center;
  align-items: center;
  width: 64px;
  height: 31px;
  border: 3px solid #e6e9ea;
  border-radius: 9px;
  font-family: Roboto, sans-serif;
  font-size: 24px;
  line-height: 24px;
  color: #e6e9ea;
  &::after {
    content: "";
    position: absolute;
    right: -9px;
    width: 4px;
    height: 10px;
    border-radius: 2px;
    background-color: #e6e9ea;
  }
`;
const BatteryLevel = styled.div`
  position: absolute;
  left: 4px;
  width: 6px;
  height: 19px;
  border-radius: 2px;
  background-color: #e9a02c;
`;
const Header = styled.header`
  display: flex;
  align-items: center;
  height: 126px;
  padding: 0 55px 26px 45px;
  border-bottom: 2px solid #1b2125;
`;
const IconButton = styled.button`
  & + & {
    margin-left: 76px;
  }
  &:last-child {
    margin-left: 85px;
  }
`;
const Avatar = styled.div`
  position: relative;
  display: flex;
  justify-content: center;
  align-items: center;
  width: 99px;
  height: 99px;
  margin: 0 33px 0 54px;
  border-radius: 50%;
  background-color: #103529;
  font-size: 46px;
  line-height: 56px;
  color: #2bcb68;
`;
const Timer = styled.svg`
  position: absolute;
  right: -8px;
  bottom: -8px;
  width: 52px;
  height: 52px;
`;
const Name = styled.h1`
  display: flex;
  flex: 1;
  align-items: center;
  gap: 17px;
  margin: 0;
  font-size: 60px;
  line-height: 72px;
  font-weight: 400;
  white-space: nowrap;
`;
const Chat = styled.main`
  position: relative;
  display: flex;
  flex: 1;
  flex-direction: column;
  min-height: 0;
`;
const WallpaperSvg = styled.svg`
  position: absolute;
  inset: 0;
  width: 100%;
  height: 100%;
`;
const List = styled.div`
  position: relative;
  flex: 1;
  min-height: 0;
  padding: 0 47px;
  overflow-y: auto;
  scrollbar-width: none;
`;
const Row = styled.div`
  display: flex;
  flex-direction: column;
  align-items: ${({ $mine }) => ($mine ? "flex-end" : "flex-start")};
  padding-top: ${({ $gap }) => $gap}px;
`;
const Bubble = styled.div`
  position: relative;
  display: flex;
  align-items: flex-end;
  width: ${({ $wide }) => ($wide ? "100%" : "auto")};
  max-width: calc(100% - 110px);
  padding: 10px 25px 8px 27px;
  border-radius: 30px;
  background-color: ${({ $mine }) => ($mine ? "#144d37" : "#1f272a")};
  ${({ $tail, $mine }) =>
    $tail &&
    ($mine ? "border-top-right-radius: 0;" : "border-top-left-radius: 0;")}
  ${({ $kind }) =>
    $kind === "stacked" &&
    css`
      flex-direction: column;
    `}
  ${({ $kind }) =>
    $kind === "overlay" &&
    css`
      display: grid;
    `}
`;
const Tail = styled.svg`
  position: absolute;
  top: 0;
  width: 40px;
  height: 32px;
  ${({ $mine }) =>
    $mine
      ? css`
          right: -19px;
          color: #144d37;
          transform: scaleX(-1);
        `
      : css`
          left: -19px;
          color: #1f272a;
        `}
`;
const Text = styled.p`
  position: relative;
  grid-area: 1 / 1;
  align-self: stretch;
  margin: 0;
  padding-bottom: 14px;
  font-size: 58px;
  line-height: 73px;
  white-space: ${({ $oneLine }) => ($oneLine ? "nowrap" : "normal")};
`;
const Emoji = styled.svg`
  width: 77px;
  height: 77px;
  margin: 5px 0 2px 4px;
  vertical-align: -20px;
`;
const Meta = styled.span`
  display: flex;
  grid-area: 1 / 1;
  align-self: end;
  justify-self: end;
  align-items: center;
  gap: 12px;
  margin-left: ${({ $mine, $kind }) => ($kind ? 0 : $mine ? 24 : 40)}px;
  font-size: 42px;
  line-height: 54px;
  white-space: nowrap;
  color: ${({ $mine }) => ($mine ? "#98b9aa" : "#989da0")};
`;
const Reaction = styled.button`
  position: relative;
  width: 96px;
  height: 90px;
  margin: -14px 0 -3px 22px;
  border: 3px solid #0b1014;
  border-radius: 50%;
  background-color: #1f272a;
`;
const Day = styled.div`
  width: fit-content;
  margin: 30px auto 0;
  padding: 14px 24px;
  border-radius: 22px;
  background-color: #12181b;
  font-size: 42px;
  line-height: 54px;
  color: #94999c;
`;
const ScrollDown = styled.button`
  position: absolute;
  right: 34px;
  bottom: 197px;
  width: 88px;
  height: 88px;
  border-radius: 50%;
  background-color: #29343a;
  color: #8e989d;
`;
const Composer = styled.div`
  position: relative;
  display: flex;
  align-items: center;
  gap: 13px;
  padding: 9px 12px 12px 13px;
`;
const Pill = styled.div`
  display: flex;
  flex: 1;
  align-items: center;
  min-width: 0;
  height: 130px;
  padding: 0 36px;
  border-radius: 65px;
  background-color: #1f272a;
`;
const FieldButton = styled.button`
  color: #8b9396;
  & + & {
    margin-left: 86px;
  }
`;
const Caret = styled.span`
  flex-shrink: 0;
  width: 6px;
  height: 86px;
  margin: 0 -6px 0 38px;
  background-color: #2fbb6b;
`;
const Field = styled.input`
  flex: 1;
  min-width: 0;
  padding: 0;
  border: none;
  outline: none;
  background: none;
  font-family: inherit;
  font-size: 64px;
  line-height: 78px;
  color: #f5f9fb;
  &::placeholder {
    color: #8b9396;
    opacity: 1;
  }
`;
const MicButton = styled.button`
  flex-shrink: 0;
  width: 132px;
  height: 132px;
  border-radius: 50%;
  background-color: #23c264;
  color: #0b1014;
`;
const NavBar = styled.nav`
  display: flex;
  justify-content: center;
  align-items: center;
  gap: 177px;
  height: 130px;
  background-color: #000000;
`;
const NavButton = styled.button`
  width: 56px;
  height: 80px;
`;
